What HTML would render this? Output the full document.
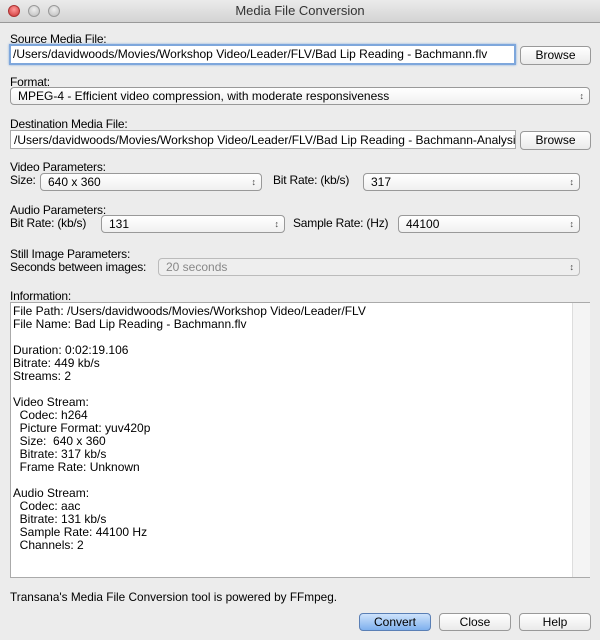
<html><head><style>
body{margin:0;width:600px;height:640px;background:#ececec;font-family:"Liberation Sans",sans-serif;font-size:12px;color:#000;position:relative;overflow:hidden}
.a{position:absolute;white-space:nowrap;letter-spacing:-0.2px}
.tb{position:absolute;left:0;top:0;width:600px;height:22px;background:linear-gradient(#ebebeb,#d3d3d3);border-bottom:1px solid #999;text-align:center;font-size:13px;line-height:22px;color:#333}
.dot{position:absolute;top:5px;width:12px;height:12px;border-radius:50%;background:radial-gradient(circle at 50% 35%,#eee,#bbb);border:1px solid #999;box-sizing:border-box}
.in{position:absolute;background:#fff;border:1px solid #aaa;box-sizing:border-box;padding-left:3px;line-height:18px;white-space:nowrap;overflow:hidden}
.sel{position:absolute;background:linear-gradient(#fff,#f0f0f0);border:1px solid #999;border-radius:4px;box-sizing:border-box;padding-left:7px;line-height:16px;white-space:nowrap}
.sel:after{content:"\2195";position:absolute;right:5px;top:0;font-size:9px;color:#444}
.btn{position:absolute;background:linear-gradient(#fff,#eaeaea);border:1px solid #999;border-radius:4px;box-sizing:border-box;text-align:center;line-height:17px}
</style></head><body>
<div class="tb">Media File Conversion</div>
<div class="dot" style="left:8px;background:radial-gradient(circle at 50% 35%,#f99,#c33);border-color:#a33"></div>
<div class="dot" style="left:28px"></div>
<div class="dot" style="left:48px"></div>

<div class="a" style="left:10px;top:32px">Source Media File:</div>
<div class="in" style="left:9px;top:44px;width:507px;height:21px;border:2px solid #7ea7dc;box-shadow:0 0 2px #7ea7dc;padding-left:2px;line-height:17px">/Users/davidwoods/Movies/Workshop Video/Leader/FLV/Bad Lip Reading - Bachmann.flv</div>
<div class="btn" style="left:520px;top:46px;width:71px;height:19px">Browse</div>

<div class="a" style="left:10px;top:75px">Format:</div>
<div class="sel" style="left:10px;top:87px;width:580px;height:18px">MPEG-4 - Efficient video compression, with moderate responsiveness</div>

<div class="a" style="left:10px;top:117px">Destination Media File:</div>
<div class="in" style="left:10px;top:130px;width:506px;height:19px">/Users/davidwoods/Movies/Workshop Video/Leader/FLV/Bad Lip Reading - Bachmann-Analysis</div>
<div class="btn" style="left:520px;top:131px;width:71px;height:19px">Browse</div>

<div class="a" style="left:10px;top:160px">Video Parameters:</div>
<div class="a" style="left:10px;top:173px">Size:</div>
<div class="sel" style="left:40px;top:173px;width:222px;height:18px">640 x 360</div>
<div class="a" style="left:273px;top:173px">Bit Rate: (kb/s)</div>
<div class="sel" style="left:363px;top:173px;width:217px;height:18px">317</div>

<div class="a" style="left:10px;top:203px">Audio Parameters:</div>
<div class="a" style="left:10px;top:216px">Bit Rate: (kb/s)</div>
<div class="sel" style="left:101px;top:215px;width:184px;height:18px">131</div>
<div class="a" style="left:293px;top:216px">Sample Rate: (Hz)</div>
<div class="sel" style="left:398px;top:215px;width:182px;height:18px">44100</div>

<div class="a" style="left:10px;top:247px">Still Image Parameters:</div>
<div class="a" style="left:10px;top:260px">Seconds between images:</div>
<div class="sel" style="left:158px;top:258px;width:422px;height:18px;color:#888;background:#eee;border-color:#bbb">20 seconds</div>

<div class="a" style="left:10px;top:289px">Information:</div>
<div class="in" style="left:10px;top:302px;width:580px;height:276px;padding:2px 0 0 2px;line-height:13px;white-space:pre">File Path: /Users/davidwoods/Movies/Workshop Video/Leader/FLV
File Name: Bad Lip Reading - Bachmann.flv

Duration: 0:02:19.106
Bitrate: 449 kb/s
Streams: 2

Video Stream:
  Codec: h264
  Picture Format: yuv420p
  Size:  640 x 360
  Bitrate: 317 kb/s
  Frame Rate: Unknown

Audio Stream:
  Codec: aac
  Bitrate: 131 kb/s
  Sample Rate: 44100 Hz
  Channels: 2</div>
<div style="position:absolute;left:572px;top:303px;width:17px;height:274px;background:#f4f4f4;border-left:1px solid #ddd"></div>

<div class="a" style="left:10px;top:590px;font-size:11.8px;letter-spacing:0">Transana's Media File Conversion tool is powered by FFmpeg.</div>
<div class="btn" style="left:359px;top:613px;width:72px;height:18px;background:linear-gradient(#cfe3fb,#7fb0ee);border-color:#5a7fb5">Convert</div>
<div class="btn" style="left:439px;top:613px;width:72px;height:18px">Close</div>
<div class="btn" style="left:519px;top:613px;width:72px;height:18px">Help</div>
</body></html>
